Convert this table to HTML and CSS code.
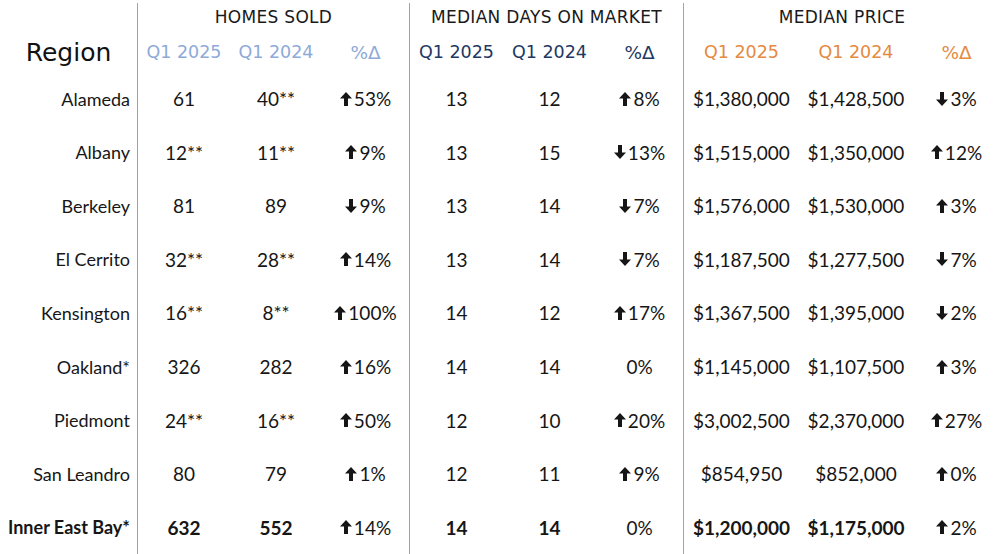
FILE: index.html
```html
<!DOCTYPE html>
<html>
<head>
<meta charset="utf-8">
<link rel="stylesheet" href="styles.css">
</head>
<body>
<svg width="0" height="0" class="defs">
  <defs>
    <symbol id="up" viewBox="0 0 12 14"><path d="M6 0 L12 6.6 H8 V14 H4 V6.6 H0 Z"/></symbol>
    <symbol id="down" viewBox="0 0 12 14"><path d="M6 14 L12 7.4 H8 V0 H4 V7.4 H0 Z"/></symbol>
  </defs>
</svg>
<div class="table">
  <div class="cell blank"></div>
  <div class="cell title g">HOMES SOLD</div>
  <div class="cell title g">MEDIAN DAYS ON MARKET</div>
  <div class="cell title g">MEDIAN PRICE</div>

  <div class="cell region-h">Region</div>
  <div class="cell sub blue g">Q1 2025</div><div class="cell sub blue">Q1 2024</div><div class="cell sub blue pct">%Δ</div>
  <div class="cell sub navy g">Q1 2025</div><div class="cell sub navy">Q1 2024</div><div class="cell sub navy pct">%Δ</div>
  <div class="cell sub orange g">Q1 2025</div><div class="cell sub orange">Q1 2024</div><div class="cell sub orange pct">%Δ</div>

  <div class="cell name">Alameda</div>
  <div class="cell num g">61</div><div class="cell num">40**</div><div class="cell num"><svg class="ar"><use href="#up"/></svg>53%</div>
  <div class="cell num g">13</div><div class="cell num">12</div><div class="cell num"><svg class="ar"><use href="#up"/></svg>8%</div>
  <div class="cell num g">$1,380,000</div><div class="cell num">$1,428,500</div><div class="cell num"><svg class="ar"><use href="#down"/></svg>3%</div>

  <div class="cell name">Albany</div>
  <div class="cell num g">12**</div><div class="cell num">11**</div><div class="cell num"><svg class="ar"><use href="#up"/></svg>9%</div>
  <div class="cell num g">13</div><div class="cell num">15</div><div class="cell num"><svg class="ar"><use href="#down"/></svg>13%</div>
  <div class="cell num g">$1,515,000</div><div class="cell num">$1,350,000</div><div class="cell num"><svg class="ar"><use href="#up"/></svg>12%</div>

  <div class="cell name">Berkeley</div>
  <div class="cell num g">81</div><div class="cell num">89</div><div class="cell num"><svg class="ar"><use href="#down"/></svg>9%</div>
  <div class="cell num g">13</div><div class="cell num">14</div><div class="cell num"><svg class="ar"><use href="#down"/></svg>7%</div>
  <div class="cell num g">$1,576,000</div><div class="cell num">$1,530,000</div><div class="cell num"><svg class="ar"><use href="#up"/></svg>3%</div>

  <div class="cell name">El Cerrito</div>
  <div class="cell num g">32**</div><div class="cell num">28**</div><div class="cell num"><svg class="ar"><use href="#up"/></svg>14%</div>
  <div class="cell num g">13</div><div class="cell num">14</div><div class="cell num"><svg class="ar"><use href="#down"/></svg>7%</div>
  <div class="cell num g">$1,187,500</div><div class="cell num">$1,277,500</div><div class="cell num"><svg class="ar"><use href="#down"/></svg>7%</div>

  <div class="cell name">Kensington</div>
  <div class="cell num g">16**</div><div class="cell num">8**</div><div class="cell num"><svg class="ar"><use href="#up"/></svg>100%</div>
  <div class="cell num g">14</div><div class="cell num">12</div><div class="cell num"><svg class="ar"><use href="#up"/></svg>17%</div>
  <div class="cell num g">$1,367,500</div><div class="cell num">$1,395,000</div><div class="cell num"><svg class="ar"><use href="#down"/></svg>2%</div>

  <div class="cell name">Oakland*</div>
  <div class="cell num g">326</div><div class="cell num">282</div><div class="cell num"><svg class="ar"><use href="#up"/></svg>16%</div>
  <div class="cell num g">14</div><div class="cell num">14</div><div class="cell num">0%</div>
  <div class="cell num g">$1,145,000</div><div class="cell num">$1,107,500</div><div class="cell num"><svg class="ar"><use href="#up"/></svg>3%</div>

  <div class="cell name">Piedmont</div>
  <div class="cell num g">24**</div><div class="cell num">16**</div><div class="cell num"><svg class="ar"><use href="#up"/></svg>50%</div>
  <div class="cell num g">12</div><div class="cell num">10</div><div class="cell num"><svg class="ar"><use href="#up"/></svg>20%</div>
  <div class="cell num g">$3,002,500</div><div class="cell num">$2,370,000</div><div class="cell num"><svg class="ar"><use href="#up"/></svg>27%</div>

  <div class="cell name">San Leandro</div>
  <div class="cell num g">80</div><div class="cell num">79</div><div class="cell num"><svg class="ar"><use href="#up"/></svg>1%</div>
  <div class="cell num g">12</div><div class="cell num">11</div><div class="cell num"><svg class="ar"><use href="#up"/></svg>9%</div>
  <div class="cell num g">$854,950</div><div class="cell num">$852,000</div><div class="cell num"><svg class="ar"><use href="#up"/></svg>0%</div>

  <div class="cell name bold">Inner East Bay*</div>
  <div class="cell num bold g">632</div><div class="cell num bold">552</div><div class="cell num"><svg class="ar"><use href="#up"/></svg>14%</div>
  <div class="cell num bold g">14</div><div class="cell num bold">14</div><div class="cell num">0%</div>
  <div class="cell num bold g">$1,200,000</div><div class="cell num bold">$1,175,000</div><div class="cell num"><svg class="ar"><use href="#up"/></svg>2%</div>
</div>
</body>
</html>
```

FILE: styles.css
```css
html, body {
  margin: 0;
  padding: 0;
  background: #ffffff;
}

.defs {
  position: absolute;
  width: 0;
  height: 0;
}

.table {
  display: grid;
  grid-template-columns: 137px 93px 92px 87px 94px 93px 87px 116px 114px 87px;
  grid-template-rows: 31px 38px repeat(9, 1fr);
  height: 551px;
  padding-top: 3px;
  width: 1000px;
  font-family: "Lato", "Liberation Sans", sans-serif;
  color: #161616;
}

.cell {
  display: flex;
  align-items: center;
  justify-content: center;
  white-space: nowrap;
}

.g {
  border-left: 1.5px solid #a3a3a3;
}

.title {
  grid-column: span 3;
  font-family: "DejaVu Sans", sans-serif;
  font-size: 17px;
  letter-spacing: 0.3px;
  color: #1a1a1a;
  padding-bottom: 3px;
}

.region-h {
  font-family: "DejaVu Sans", sans-serif;
  font-size: 25px;
  color: #111;
  padding-bottom: 2px;
}

.sub {
  font-family: "DejaVu Sans", sans-serif;
  font-size: 17.5px;
  padding-bottom: 2px;
}

.pct {
  font-size: 18.5px;
}

.blue { color: #8eaad8; }
.navy { color: #1e3763; }
.orange { color: #e48a42; }

.name {
  justify-content: flex-end;
  padding-right: 7px;
  font-size: 18px;
}

.num {
  font-size: 19px;
}

.bold {
  font-weight: 700;
}

.ar {
  width: 12px;
  height: 14px;
  margin-right: 2px;
  fill: #161616;
}
```
